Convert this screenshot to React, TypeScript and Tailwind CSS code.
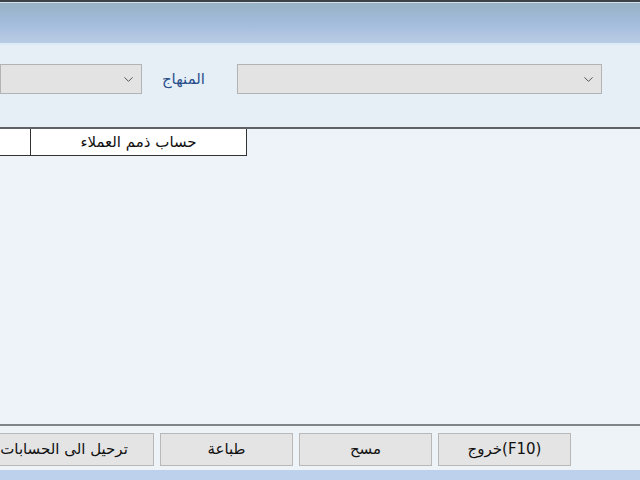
import { ChevronDown } from 'lucide-react'

const font = { fontFamily: "Tahoma, 'DejaVu Sans', sans-serif" }

function Combo({ className }: { className: string }) {
  return (
    <div className={`h-[30px] bg-[#e3e3e3] border border-[#b3b3b3] flex items-center justify-end pr-[5px] ${className}`}>
      <ChevronDown size={15} strokeWidth={1.6} className="text-[#555]" />
    </div>
  )
}

function Btn({ label, w }: { label: string; w: string }) {
  return (
    <button className={`h-[33px] shrink-0 ${w} bg-[#e4e4e4] border border-[#b8b8b8] text-[15px] text-[#111] flex items-center justify-center whitespace-nowrap`}>
      {label}
    </button>
  )
}

export default function App() {
  return (
    <div className="w-[640px] h-[480px] flex flex-col bg-[#eef3fa] overflow-hidden" style={font}>
      {/* window title strip */}
      <div className="h-[2px] bg-[#3a4448]" />
      <div className="h-[1px] bg-[#d8e0e6]" />
      <div className="h-[40px] bg-gradient-to-b from-[#96b2c4] via-[#a3bcdc] to-[#b9cce4]" />
      <div className="h-[2px] bg-[#dcebf8]" />

      {/* header panel */}
      <div className="h-[82px] bg-[#e6eff6] flex items-start pt-[19px]">
        <Combo className="w-[142px]" />
        <div className="w-[95px] flex justify-center pr-[12px] pt-[4px] text-[15px] text-[#2a4f8c]">المنهاج</div>
        <Combo className="w-[365px]" />
      </div>
      <div className="h-[2px] bg-[#5e6266]" />

      {/* tabs */}
      <div className="flex h-[27px]">
        <div className="w-[30px] bg-white border-b border-[#333]" />
        <div className="w-[217px] bg-white border border-t-0 border-[#333] flex items-center justify-center text-[15px] text-[#111]">
          حساب ذمم العملاء
        </div>
        <div className="flex-1" />
      </div>

      {/* content */}
      <div className="flex-1 bg-[#eef3fa]" />

      {/* footer */}
      <div className="h-[2px] bg-[#80858a]" />
      <div className="h-[44px] bg-[#eef3f8] flex items-start pt-[7px] gap-[6px]">
        <Btn label="ترحيل الى الحسابات" w="w-[180px] -ml-[26px]" />
        <Btn label="طباعة" w="w-[133px]" />
        <Btn label="مسح" w="w-[133px]" />
        <Btn label="خروج(F10)" w="w-[133px]" />
      </div>
      <div className="h-[10px] bg-[#bdd0ec]" />
    </div>
  )
}
